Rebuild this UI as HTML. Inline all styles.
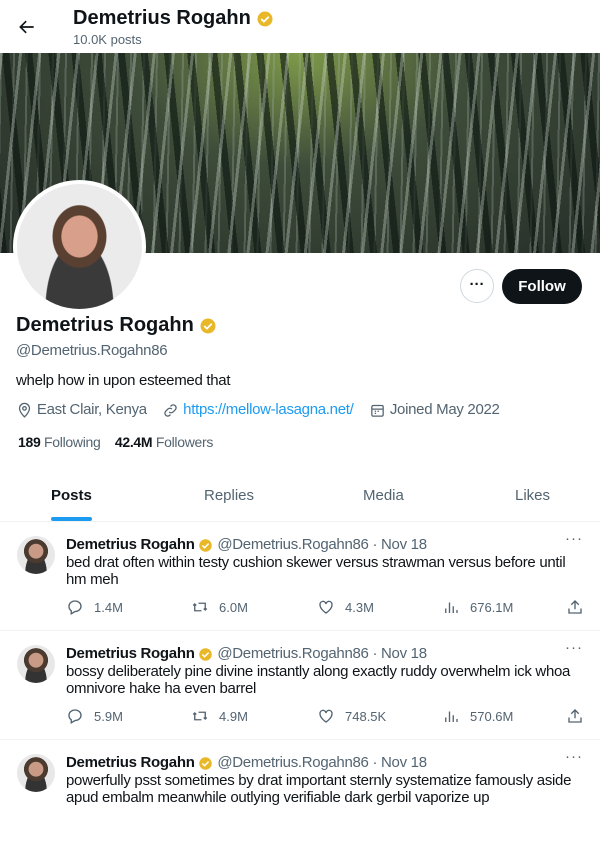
<!DOCTYPE html>
<html><head><meta charset="utf-8"><style>
*{margin:0;padding:0;box-sizing:border-box}
body{width:600px;height:800px;overflow:hidden;background:#fff;font-family:"Liberation Sans",sans-serif;color:#0f1419;position:relative}
.abs{position:absolute}
.badge{display:inline-block;vertical-align:middle}
.gray{color:#536471}
.banner{left:0;top:53px;width:600px;height:200px;background:
repeating-linear-gradient(96deg,rgba(210,220,210,.35) 0 3px,transparent 3px 19px),
repeating-linear-gradient(84deg,rgba(10,20,15,.6) 0 7px,transparent 7px 23px),
repeating-linear-gradient(91deg,rgba(160,175,165,.3) 0 2px,transparent 2px 13px),
radial-gradient(ellipse at 50% 0%,#7f9a4a 0%,#3e4c3a 40%,#262e28 100%)}
.tweet{left:0;width:600px;height:109px;border-top:1px solid #eff3f4}
.tweet .av{position:absolute;left:17px;top:14px;width:38px;height:38px;border-radius:50%;background:radial-gradient(circle at 50% 40%,#c99a85 0 24%,#4a3a30 26% 40%,transparent 41%),radial-gradient(ellipse at 50% 100%,#333 0 40%,transparent 41%),#e8e8e8}
.tweet .hd{position:absolute;left:66px;top:14px;font-size:15px;white-space:nowrap;letter-spacing:-0.3px}
.tweet .tx{position:absolute;left:66px;top:32px;width:512px;font-size:15px;line-height:17px;letter-spacing:-0.3px}
.tweet .dots{position:absolute;right:17px;top:8px;font-size:15px;color:#536471;letter-spacing:1px}
.act{position:absolute;top:76px;font-size:13px;color:#536471;display:flex;align-items:center;gap:10px}
.act svg{width:18px;height:18px;fill:none;stroke:#536471;stroke-width:1.8}
.t15{font-size:15px;letter-spacing:-0.3px}
</style></head><body>
<svg class="abs" style="left:17px;top:17px" width="20" height="20" viewBox="0 0 24 24"><path d="M20 12H5M11 5l-7 7 7 7" fill="none" stroke="#0f1419" stroke-width="2"/></svg>
<div class="abs" style="left:73px;top:7px;font-size:20px;font-weight:bold">Demetrius Rogahn <svg class="badge" width="18" height="18" viewBox="0 0 24 24"><circle cx="12" cy="12" r="10" fill="#e8b829"/><path d="M7 12l3.5 3.5L17 9" stroke="#fff" stroke-width="2.4" fill="none"/></svg></div>
<div class="abs gray" style="left:73px;top:32px;font-size:13px">10.0K posts</div>
<div class="abs banner"></div>
<div class="abs" style="left:13px;top:180px;width:133px;height:133px;border-radius:50%;background:#fff;padding:4px"><div style="width:100%;height:100%;border-radius:50%;background:radial-gradient(ellipse at 50% 42%,#d8a08a 0 20%,#5a4030 21% 30%,transparent 31%),radial-gradient(ellipse at 50% 100%,#3a3a3a 0 38%,transparent 39%),#ebebeb"></div></div>
<div class="abs" style="left:460px;top:269px;width:34px;height:34px;border:1px solid #cfd9de;border-radius:50%;text-align:center;line-height:30px;font-weight:bold;font-size:15px">···</div>
<div class="abs" style="left:502px;top:269px;width:80px;height:35px;border-radius:18px;background:#0f1419;color:#fff;font-weight:bold;font-size:15px;text-align:center;line-height:35px">Follow</div>
<div class="abs" style="left:16px;top:314px;font-size:20px;font-weight:bold">Demetrius Rogahn <svg class="badge" width="18" height="18" viewBox="0 0 24 24"><circle cx="12" cy="12" r="10" fill="#e8b829"/><path d="M7 12l3.5 3.5L17 9" stroke="#fff" stroke-width="2.4" fill="none"/></svg></div>
<div class="abs gray t15" style="left:16px;top:342px">@Demetrius.Rogahn86</div>
<div class="abs t15" style="left:16px;top:372px">whelp how in upon esteemed that</div>
<div class="abs gray t15" style="left:16px;top:401px;white-space:nowrap">
<svg class="badge" width="17" height="17" viewBox="0 0 24 24" fill="none" stroke="#536471" stroke-width="1.8"><path d="M12 21s-7-6.5-7-12a7 7 0 0114 0c0 5.5-7 12-7 12z"/><circle cx="12" cy="9" r="2.5"/></svg> East Clair, Kenya &nbsp;&nbsp;
<svg class="badge" width="17" height="17" viewBox="0 0 24 24" fill="none" stroke="#536471" stroke-width="1.8"><path d="M10 14a4 4 0 005.7 0l3-3a4 4 0 00-5.7-5.7l-1 1M14 10a4 4 0 00-5.7 0l-3 3a4 4 0 005.7 5.7l1-1"/></svg> <span style="color:#1d9bf0">https://mellow-lasagna.net/</span> &nbsp;&nbsp;
<svg class="badge" width="17" height="17" viewBox="0 0 24 24" fill="none" stroke="#536471" stroke-width="1.8"><rect x="4" y="5" width="16" height="15" rx="2"/><path d="M4 10h16M8 13h2M12 13h2M8 16h2"/></svg> Joined May 2022</div>
<div class="abs gray" style="left:18px;top:434px;font-size:14px;letter-spacing:-0.3px"><b style="color:#0f1419">189</b> Following &nbsp;&nbsp; <b style="color:#0f1419">42.4M</b> Followers</div>
<div class="abs" style="left:51px;top:487px;font-size:15px;font-weight:bold">Posts</div>
<div class="abs" style="left:51px;top:517px;width:41px;height:4px;border-radius:2px;background:#1d9bf0"></div>
<div class="abs gray" style="left:204px;top:487px;font-size:15px">Replies</div>
<div class="abs gray" style="left:363px;top:487px;font-size:15px">Media</div>
<div class="abs gray" style="left:515px;top:487px;font-size:15px">Likes</div>

<div class="abs tweet" style="top:521px">
<div class="av"></div><div class="dots">···</div>
<div class="hd"><b>Demetrius Rogahn</b> <svg class="badge" width="15" height="15" viewBox="0 0 24 24"><circle cx="12" cy="12" r="10" fill="#e8b829"/><path d="M7 12l3.5 3.5L17 9" stroke="#fff" stroke-width="2.4" fill="none"/></svg> <span class="gray">@Demetrius.Rogahn86 · Nov 18</span></div>
<div class="tx">bed drat often within testy cushion skewer versus strawman versus before until hm meh</div>
<div class="act" style="left:66px"><svg viewBox="0 0 24 24"><path d="M4 11a8 7 0 118 7l-5 3v-4a7 7 0 01-3-6z"/></svg>1.4M</div>
<div class="act" style="left:191px"><svg viewBox="0 0 24 24"><path d="M5 8v9h9M3 10l2-2 2 2M19 16V7h-9M21 14l-2 2-2-2"/></svg>6.0M</div>
<div class="act" style="left:317px"><svg viewBox="0 0 24 24"><path d="M12 20s-8-5-8-11a4 4 0 018-1 4 4 0 018 1c0 6-8 11-8 11z"/></svg>4.3M</div>
<div class="act" style="left:442px"><svg viewBox="0 0 24 24"><path d="M5 20v-6M10 20V6M15 20v-9M20 20v-4"/></svg>676.1M</div>
<div class="act" style="left:566px"><svg viewBox="0 0 24 24"><path d="M12 15V4M7 9l5-5 5 5M4 14v6h16v-6"/></svg></div>
</div>

<div class="abs tweet" style="top:630px">
<div class="av"></div><div class="dots">···</div>
<div class="hd"><b>Demetrius Rogahn</b> <svg class="badge" width="15" height="15" viewBox="0 0 24 24"><circle cx="12" cy="12" r="10" fill="#e8b829"/><path d="M7 12l3.5 3.5L17 9" stroke="#fff" stroke-width="2.4" fill="none"/></svg> <span class="gray">@Demetrius.Rogahn86 · Nov 18</span></div>
<div class="tx">bossy deliberately pine divine instantly along exactly ruddy overwhelm ick whoa omnivore hake ha even barrel</div>
<div class="act" style="left:66px"><svg viewBox="0 0 24 24"><path d="M4 11a8 7 0 118 7l-5 3v-4a7 7 0 01-3-6z"/></svg>5.9M</div>
<div class="act" style="left:191px"><svg viewBox="0 0 24 24"><path d="M5 8v9h9M3 10l2-2 2 2M19 16V7h-9M21 14l-2 2-2-2"/></svg>4.9M</div>
<div class="act" style="left:317px"><svg viewBox="0 0 24 24"><path d="M12 20s-8-5-8-11a4 4 0 018-1 4 4 0 018 1c0 6-8 11-8 11z"/></svg>748.5K</div>
<div class="act" style="left:442px"><svg viewBox="0 0 24 24"><path d="M5 20v-6M10 20V6M15 20v-9M20 20v-4"/></svg>570.6M</div>
<div class="act" style="left:566px"><svg viewBox="0 0 24 24"><path d="M12 15V4M7 9l5-5 5 5M4 14v6h16v-6"/></svg></div>
</div>

<div class="abs tweet" style="top:739px">
<div class="av"></div><div class="dots">···</div>
<div class="hd"><b>Demetrius Rogahn</b> <svg class="badge" width="15" height="15" viewBox="0 0 24 24"><circle cx="12" cy="12" r="10" fill="#e8b829"/><path d="M7 12l3.5 3.5L17 9" stroke="#fff" stroke-width="2.4" fill="none"/></svg> <span class="gray">@Demetrius.Rogahn86 · Nov 18</span></div>
<div class="tx">powerfully psst sometimes by drat important sternly systematize famously aside apud embalm meanwhile outlying verifiable dark gerbil vaporize up</div>
</div>
</body></html>
